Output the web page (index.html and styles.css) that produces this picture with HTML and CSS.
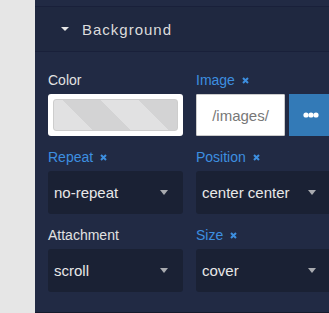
FILE: index.html
```html
<!DOCTYPE html>
<html lang="en">
<head>
    <meta charset="UTF-8">
    <title>Background settings</title>
    <link rel="stylesheet" href="styles.css">
</head>
<body>
    <div class="sidebar">
        <div class="topbar"></div>
        <div class="section-head">
            <span class="caret-down"></span>
            <span class="section-title">Background</span>
        </div>
        <div class="fields">
            <div class="field">
                <label>Color</label>
                <div class="swatch"><div class="swatch-inner"></div></div>
            </div>
            <div class="field">
                <label class="set">Image <svg class="clear" width="7" height="7" viewBox="0 0 7 7"><path d="M1 1L6 6M6 1L1 6"/></svg></label>
                <div class="image-row">
                    <input type="text" class="image-input" value="/images/" readonly>
                    <button class="browse">
                        <svg width="16" height="6" viewBox="0 0 16 6"><circle cx="3" cy="3" r="2.6"/><circle cx="8" cy="3" r="2.6"/><circle cx="13" cy="3" r="2.6"/></svg>
                    </button>
                </div>
            </div>
            <div class="field">
                <label class="set">Repeat <svg class="clear" width="7" height="7" viewBox="0 0 7 7"><path d="M1 1L6 6M6 1L1 6"/></svg></label>
                <div class="select"><span>no-repeat</span><span class="arrow"></span></div>
            </div>
            <div class="field">
                <label class="set">Position <svg class="clear" width="7" height="7" viewBox="0 0 7 7"><path d="M1 1L6 6M6 1L1 6"/></svg></label>
                <div class="select"><span>center center</span><span class="arrow"></span></div>
            </div>
            <div class="field">
                <label>Attachment</label>
                <div class="select"><span>scroll</span><span class="arrow"></span></div>
            </div>
            <div class="field">
                <label class="set">Size <svg class="clear" width="7" height="7" viewBox="0 0 7 7"><path d="M1 1L6 6M6 1L1 6"/></svg></label>
                <div class="select"><span>cover</span><span class="arrow"></span></div>
            </div>
        </div>
    </div>
</body>
</html>
```
FILE: styles.css
```css
body {
    margin: 0;
    height: 313px;
    overflow: hidden;
    background: #e6e6e6;
    font-family: "Liberation Sans", Arial, sans-serif;
}
.sidebar {
    margin-left: 35px;
    width: 309px;
    height: 312px;
    background: #212a44;
    border-bottom: 1px solid #151b2c;
}
.topbar {
    height: 6px;
    border-bottom: 1px solid #19203a;
}
.section-head {
    height: 44px;
    display: flex;
    align-items: center;
    padding-left: 26px;
    background: #1f2840;
    border-bottom: 1px solid #19203a;
}
.caret-down {
    width: 0;
    height: 0;
    border-left: 4px solid transparent;
    border-right: 4px solid transparent;
    border-top: 4px solid #e6e6e6;
    margin-right: 13px;
}
.section-title {
    color: #dcdcdc;
    font-size: 15px;
    letter-spacing: 1px;
}
.fields {
    display: grid;
    grid-template-columns: 135px 135px;
    column-gap: 13px;
    row-gap: 13px;
    padding: 20px 13px 0;
}
.field label {
    display: block;
    color: #e2e2e2;
    font-size: 14px;
    line-height: 16px;
    margin-bottom: 6px;
}
.field label.set {
    color: #3d8fe0;
}
.clear {
    margin-left: 3px;
    vertical-align: 1px;
    stroke: #3d8fe0;
    stroke-width: 2;
    fill: none;
}
.swatch {
    height: 42px;
    box-sizing: border-box;
    background: #fff;
    border-radius: 3px;
    padding: 5px;
}
.swatch-inner {
    height: 100%;
    box-sizing: border-box;
    border: 1px solid #cdcdcd;
    border-radius: 3px;
    background: repeating-linear-gradient(45deg, #e1e1e2 0 27px, #d3d3d4 27px 54px);
}
.image-row {
    display: flex;
    gap: 4px;
    height: 42px;
}
.image-input {
    width: 89px;
    box-sizing: border-box;
    border: 1px solid #ccc;
    border-radius: 1px;
    font-family: inherit;
    font-size: 15px;
    color: #777;
    text-align: center;
    padding: 0;
    background: #fff;
}
.browse {
    flex: 1;
    display: flex;
    align-items: center;
    padding: 0 0 0 14px;
    border: none;
    background: #337ab7;
    fill: #fff;
}
.select {
    height: 43px;
    box-sizing: border-box;
    display: flex;
    align-items: center;
    justify-content: space-between;
    padding: 0 15px 0 6px;
    background: #1a2134;
    border-radius: 3px;
    color: #e8e8e8;
    font-size: 15px;
}
.arrow {
    width: 0;
    height: 0;
    border-left: 4px solid transparent;
    border-right: 4px solid transparent;
    border-top: 5px solid #a9abb0;
}
```
